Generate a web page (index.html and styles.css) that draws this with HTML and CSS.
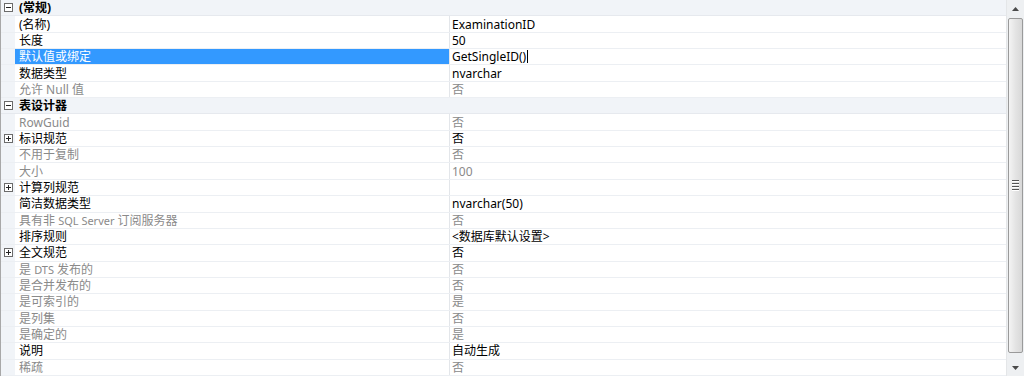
FILE: index.html
```html
<!DOCTYPE html>
<html>
<head>
<meta charset="utf-8">
<link rel="stylesheet" href="styles.css">
</head>
<body>
<div class="grid">
  <div class="rows">
    <div class="row cat"><span class="gut"><span class="box minus"></span></span><span class="name">(常规)</span><span class="val"></span></div>
    <div class="row"><span class="gut"></span><span class="name">(名称)</span><span class="val">ExaminationID</span></div>
    <div class="row"><span class="gut"></span><span class="name">长度</span><span class="val">50</span></div>
    <div class="row sel"><span class="gut"></span><span class="name">默认值或绑定</span><span class="val">GetSingleID()<span class="caret"></span></span></div>
    <div class="row"><span class="gut"></span><span class="name">数据类型</span><span class="val">nvarchar</span></div>
    <div class="row ro"><span class="gut"></span><span class="name">允许 Null 值</span><span class="val">否</span></div>
    <div class="row cat"><span class="gut"><span class="box minus"></span></span><span class="name">表设计器</span><span class="val"></span></div>
    <div class="row ro"><span class="gut"></span><span class="name">RowGuid</span><span class="val">否</span></div>
    <div class="row"><span class="gut"><span class="box plus"></span></span><span class="name">标识规范</span><span class="val">否</span></div>
    <div class="row ro"><span class="gut"></span><span class="name">不用于复制</span><span class="val">否</span></div>
    <div class="row ro"><span class="gut"></span><span class="name">大小</span><span class="val">100</span></div>
    <div class="row"><span class="gut"><span class="box plus"></span></span><span class="name">计算列规范</span><span class="val"></span></div>
    <div class="row"><span class="gut"></span><span class="name">简洁数据类型</span><span class="val">nvarchar(50)</span></div>
    <div class="row ro"><span class="gut"></span><span class="name">具有非 <span class="lat">SQL Server</span> 订阅服务器</span><span class="val">否</span></div>
    <div class="row"><span class="gut"></span><span class="name">排序规则</span><span class="val">&lt;数据库默认设置&gt;</span></div>
    <div class="row"><span class="gut"><span class="box plus"></span></span><span class="name">全文规范</span><span class="val">否</span></div>
    <div class="row ro"><span class="gut"></span><span class="name">是 <span class="lat">DTS</span> 发布的</span><span class="val">否</span></div>
    <div class="row ro"><span class="gut"></span><span class="name">是合并发布的</span><span class="val">否</span></div>
    <div class="row ro"><span class="gut"></span><span class="name">是可索引的</span><span class="val">是</span></div>
    <div class="row ro"><span class="gut"></span><span class="name">是列集</span><span class="val">否</span></div>
    <div class="row ro"><span class="gut"></span><span class="name">是确定的</span><span class="val">是</span></div>
    <div class="row"><span class="gut"></span><span class="name">说明</span><span class="val">自动生成</span></div>
    <div class="row ro"><span class="gut"></span><span class="name">稀疏</span><span class="val">否</span></div>
  </div>
  <div class="scrollbar">
    <div class="arrow up"><svg width="7" height="4" viewBox="0 0 7 4"><path d="M0 4 L3.5 0 L7 4 Z" fill="#4a4a4a"/></svg></div>
    <div class="track">
      <div class="thumb">
        <div class="grip"><i></i><i></i><i></i><i></i></div>
      </div>
    </div>
    <div class="arrow down"><svg width="7" height="4" viewBox="0 0 7 4"><path d="M0 0 L7 0 L3.5 4 Z" fill="#4a4a4a"/></svg></div>
  </div>
</div>
</body>
</html>
```
FILE: styles.css
```css
html, body {
  margin: 0;
  padding: 0;
  background: #ffffff;
}
body {
  font-family: "Noto Sans", "Noto Sans CJK SC", sans-serif;
  font-size: 12px;
  color: #000;
}
.grid {
  display: flex;
  width: 1024px;
  height: 376px;
  overflow: hidden;
  border-left: 1px solid #a8a8a8;
  box-sizing: border-box;
}
.rows {
  flex: 1;
  display: grid;
  grid-template-rows: repeat(23, 1fr);
  height: 376px;
}
.row {
  display: grid;
  grid-template-columns: 14px 435px 1fr;
  align-items: stretch;
  border-bottom: 1px solid #eceff3;
  line-height: 15px;
  min-height: 0;
}
.gut {
  background: #f1f4f8;
  display: flex;
  align-items: center;
  justify-content: center;
}
.name {
  padding-left: 4px;
  display: flex;
  align-items: center;
  white-space: pre;
  border-right: 1px solid #e3e6ea;
}
.lat {
  font-size: 11px;
}
.val {
  padding-left: 2px;
  display: flex;
  align-items: center;
  white-space: nowrap;
}
.cat {
  background: #f1f4f8;
  border-bottom-color: #e6e9ee;
}
.cat .name {
  font-weight: bold;
  border-right: none;
  padding-left: 4px;
}
.ro .name, .ro .val {
  color: #8a8a8a;
}
.sel .name {
  background: #3399ff;
  color: #ffffff;
}
.caret {
  display: inline-block;
  width: 1px;
  height: 13px;
  background: #000;
  margin-left: 1px;
}
.box {
  width: 7px;
  height: 7px;
  border: 1px solid #6b6b6b;
  background: #fff;
  position: relative;
}
.box::before {
  content: "";
  position: absolute;
  left: 1px;
  top: 3px;
  width: 5px;
  height: 1px;
  background: #222;
}
.box.plus::after {
  content: "";
  position: absolute;
  left: 3px;
  top: 1px;
  width: 1px;
  height: 5px;
  background: #222;
}
.scrollbar {
  width: 17px;
  display: flex;
  flex-direction: column;
  background: #eef0f2;
  border-left: 1px solid #e4e6e8;
}
.arrow {
  height: 17px;
  display: flex;
  align-items: center;
  justify-content: center;
}
.track {
  flex: 1;
  padding: 0 1px;
  display: flex;
}
.thumb {
  flex: 1;
  margin: 1px 0 6px;
  border: 1px solid #9a9a9a;
  border-radius: 2px;
  background: linear-gradient(to right, #f4f4f4, #e4e4e4 50%, #d8d8d8);
  display: flex;
  align-items: center;
  justify-content: center;
}
.grip {
  display: flex;
  flex-direction: column;
  gap: 1px;
}
.grip i {
  display: block;
  width: 7px;
  height: 1px;
  background: #555;
  border-bottom: 1px solid #fff;
}
```
